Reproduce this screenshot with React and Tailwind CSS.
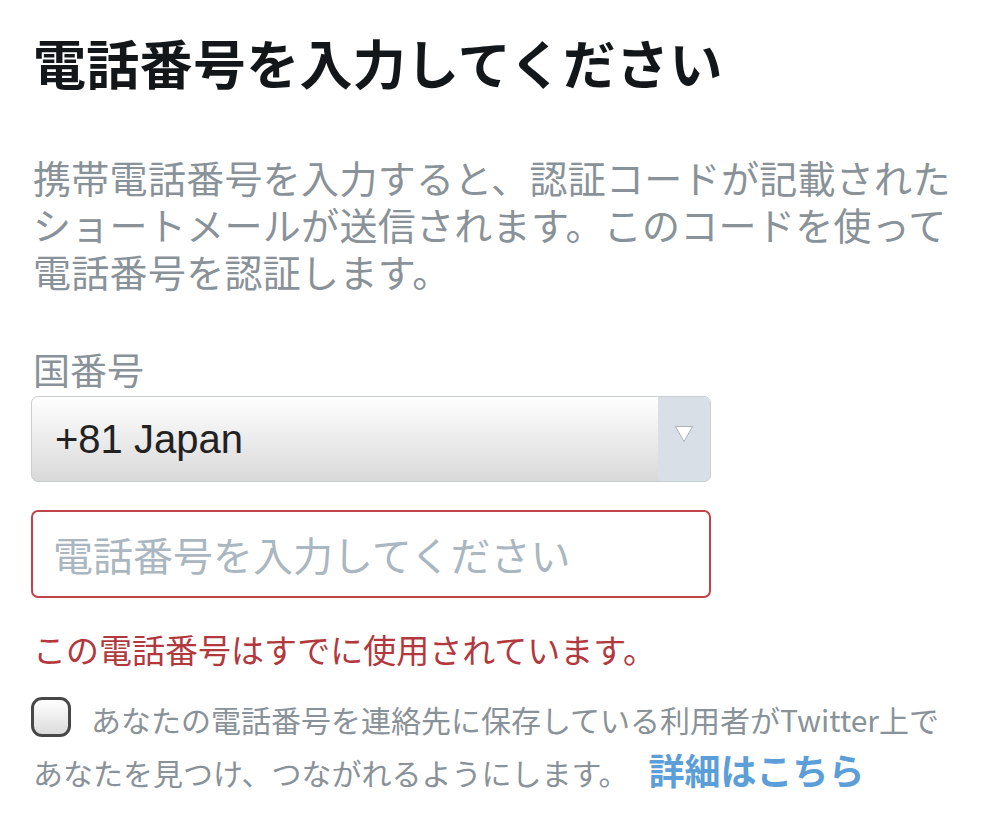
// phone number entry form

import { useState } from 'react';

const font = { fontFamily: '"Noto Sans CJK JP", "Noto Sans", sans-serif' };

const CountrySelect = ({ value }) => (
  <div className="relative mt-[4px] h-[86px] w-[680px] rounded-[7px] border border-[#c8ced4] bg-gradient-to-b from-white to-[#d9d9d9] flex items-center overflow-hidden">
    <span
      className="pl-[23px] text-[40px] text-[#222] flex-1"
      style={{ fontFamily: '"Liberation Sans", Arial, sans-serif' }}
    >
      {value}
    </span>
    <div className="h-full w-[52px] bg-[#d9dfe6] flex items-start justify-center pt-[28px]">
      <svg width="20" height="18" viewBox="0 0 20 18">
        <polygon points="1.5,1.5 18.5,1.5 10,16.5" fill="#fff" stroke="#a9b1b9" strokeWidth="1" />
      </svg>
    </div>
  </div>
);

export default function App() {
  const [phone, setPhone] = useState('');
  const [shareContacts, setShareContacts] = useState(false);

  return (
    <div className="min-h-[839px] w-[999px] bg-white pl-[33px]" style={font}>
      <h1 className="pt-[30px] text-[53px] leading-[64px] font-bold text-[#14171a] tracking-[0.3px]">
        電話番号を入力してください
      </h1>

      <p className="mt-[59px] w-[940px] text-[38px] leading-[47px] text-[#8a9299] tracking-[0.3px]">
        携帯電話番号を入力すると、認証コードが記載されたショートメールが送信されます。このコードを使って電話番号を認証します。
      </p>

      <div className="mt-[52px] ml-[-2px]">
        <label className="block pl-[2px] text-[37px] leading-[46px] text-[#8a9299]">国番号</label>
        <CountrySelect value="+81 Japan" />

        <input
          value={phone}
          onChange={(e) => setPhone(e.target.value)}
          placeholder="電話番号を入力してください"
          className="mt-[28px] h-[88px] w-[680px] rounded-[7px] border-2 border-[#c2434b] px-[20px] text-[40px] text-[#222] placeholder:text-[#aab6c0] outline-none"
          style={font}
        />
      </div>

      <p className="mt-[28px] text-[33px] leading-[46px] text-[#b2383e]">
        この電話番号はすでに使用されています。
      </p>

      <div className="mt-[22px] w-[940px] text-[30px] leading-[50px] text-[#8a9299]">
        <button
          onClick={() => setShareContacts(!shareContacts)}
          className="inline-block align-[-2px] ml-[-2px] mr-[20px] h-[40px] w-[40px] rounded-[11px] border-[3px] border-[#474747] bg-gradient-to-b from-white to-[#dcdcdc]"
        />
        あなたの電話番号を連絡先に保存している利用者がTwitter上で
        <br />
        あなたを見つけ、つながれるようにします。
        <a href="#" className="ml-[20px] text-[36px] font-bold text-[#5b9ed8]">詳細はこちら</a>
      </div>
    </div>
  );
}
